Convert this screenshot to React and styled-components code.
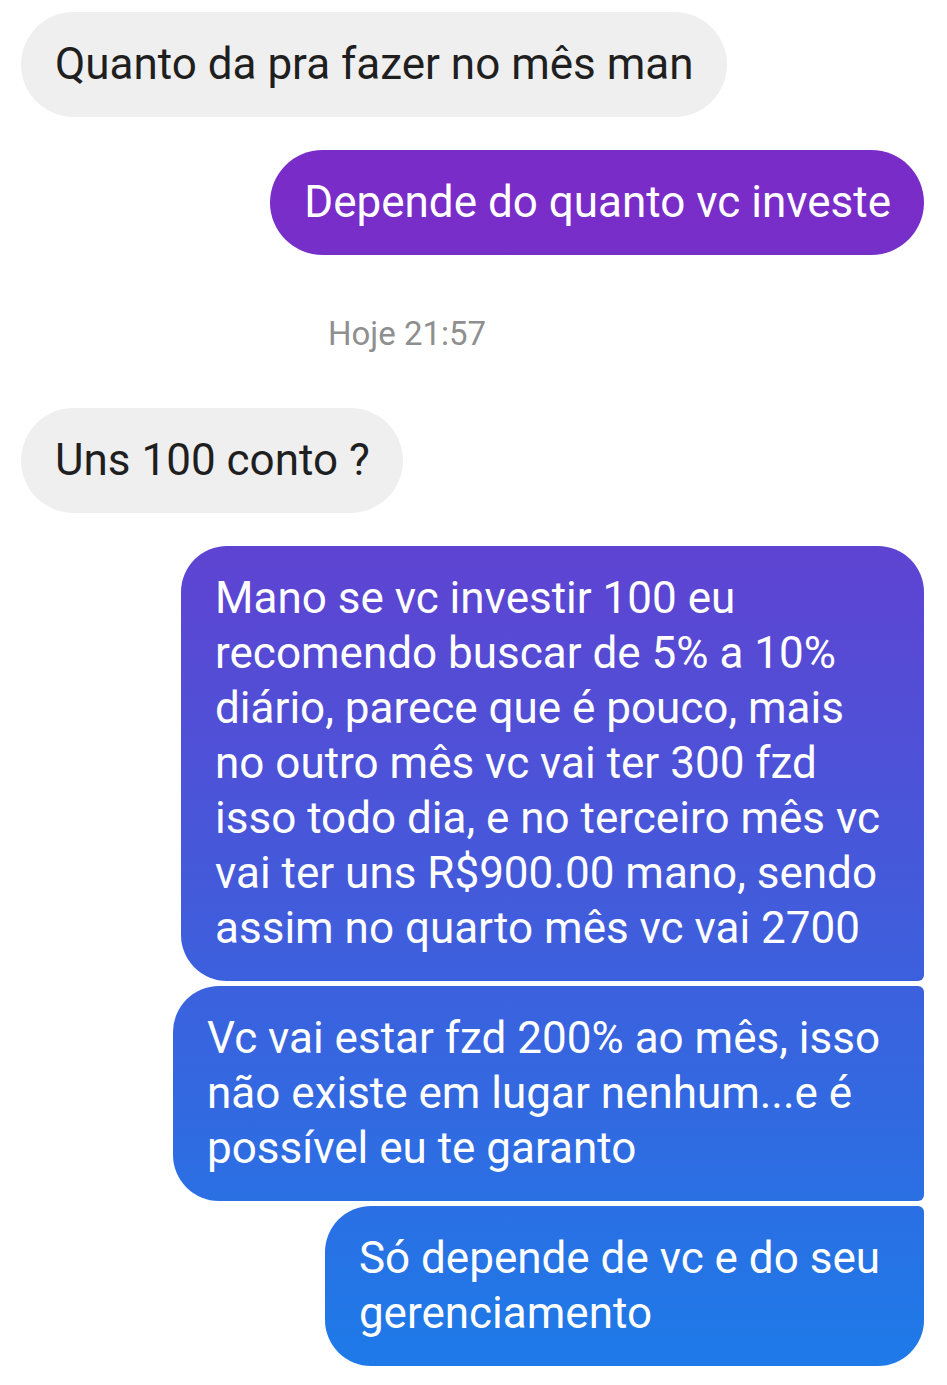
import styled, { createGlobalStyle } from "styled-components";

const GlobalStyle = createGlobalStyle`
  html, body {
    margin: 0;
    padding: 0;
    background: #ffffff;
  }
  body {
    font-family: Roboto, "Noto Sans", "Liberation Sans", sans-serif;
  }
`;

const messages = [
  { id: 1, type: "them", text: "Quanto da pra fazer no mês man" },
  { id: 2, type: "me", text: "Depende do quanto vc investe", shape: "pill", gap: 33 },
  { id: 3, type: "time", text: "Hoje 21:57" },
  { id: 4, type: "them", text: "Uns 100 conto ?", gap: 0 },
  {
    id: 5,
    type: "me",
    shape: "first",
    gap: 33,
    text:
      "Mano se vc investir 100 eu\nrecomendo buscar de 5% a 10%\ndiário, parece que é pouco, mais\nno outro mês vc vai ter 300 fzd\nisso todo dia, e no terceiro mês vc\nvai ter uns R$900.00 mano, sendo\nassim no quarto mês vc vai 2700",
  },
  {
    id: 6,
    type: "me",
    shape: "middle",
    gap: 5,
    text:
      "Vc vai estar fzd 200% ao mês, isso\nnão existe em lugar nenhum...e é\npossível eu te garanto",
  },
  {
    id: 7,
    type: "me",
    shape: "last",
    gap: 5,
    text: "Só depende de vc e do seu\ngerenciamento",
  },
];

const radii = {
  pill: "53px",
  first: "46px 46px 6px 46px",
  middle: "46px 6px 6px 46px",
  last: "46px 6px 46px 46px",
};

function App() {
  return (
    <>
      <GlobalStyle />
      <Thread>
        {messages.map((m) => {
          if (m.type === "time") {
            return <Stamp key={m.id}>{m.text}</Stamp>;
          }
          if (m.type === "them") {
            return (
              <Row key={m.id} $gap={m.gap ?? 33}>
                <Received>{m.text}</Received>
              </Row>
            );
          }
          return (
            <Row key={m.id} $mine $gap={m.gap}>
              <Sent $radius={radii[m.shape]} $multi={m.shape !== "pill"}>
                {m.text}
              </Sent>
            </Row>
          );
        })}
      </Thread>
    </>
  );
}

const Thread = styled.div`
  display: flex;
  flex-direction: column;
  padding: 12px 23px 20px 21px;
`;

const Row = styled.div`
  display: flex;
  justify-content: ${(p) => (p.$mine ? "flex-end" : "flex-start")};
  margin-top: ${(p) => p.$gap}px;

  &:first-child {
    margin-top: 0;
  }
`;

const Bubble = styled.div`
  box-sizing: border-box;
  padding: 25px 33px 25px 34px;
  font-size: 44px;
  line-height: 55px;
  white-space: pre-line;
  width: fit-content;
`;

const Received = styled(Bubble)`
  background: #efefef;
  color: #1f1f1f;
  border-radius: 53px;
`;

const Sent = styled(Bubble)`
  color: #ffffff;
  border-radius: ${(p) => p.$radius};
  padding-right: ${(p) => (p.$multi ? "44px" : "33px")};
  background: linear-gradient(180deg, #7a2cc8 0px, #7a2cc8 200px, #1e7ae8 1360px);
  background-attachment: fixed;
`;

const Stamp = styled.div`
  margin: 58px 0 54px 307px;
  font-size: 33px;
  line-height: 41px;
  color: #8f8f8f;
`;

export default App;
